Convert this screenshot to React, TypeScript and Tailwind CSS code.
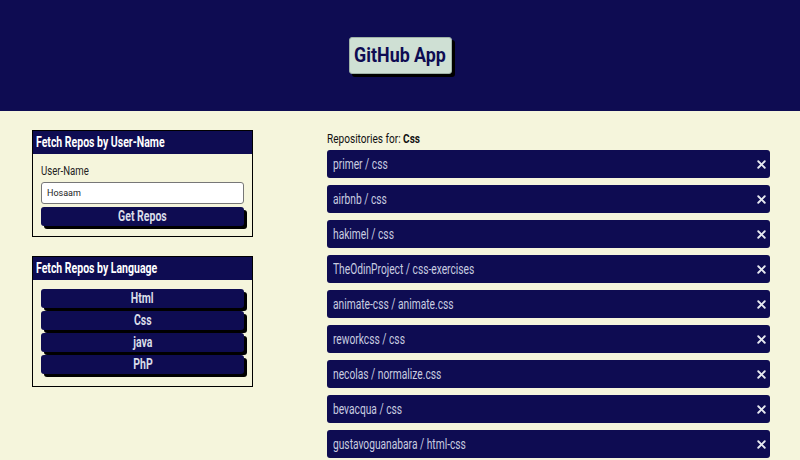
import { X } from 'lucide-react'
import type { ReactNode } from 'react'

const repos = [
  'primer / css',
  'airbnb / css',
  'hakimel / css',
  'TheOdinProject / css-exercises',
  'animate-css / animate.css',
  'reworkcss / css',
  'necolas / normalize.css',
  'bevacqua / css',
  'gustavoguanabara / html-css',
]

const langs = ['Html', 'Css', 'java', 'PhP']

const font = { fontFamily: 'Roboto, "Liberation Sans", sans-serif' }

// the original uses a condensed face; squeeze Roboto to match widths
function Narrow({ children, className = 'scale-x-[0.75] origin-center' }: { children: ReactNode; className?: string }) {
  return <span className={`inline-block whitespace-nowrap ${className}`}>{children}</span>
}

export default function App() {
  return (
    <div className="min-h-[460px] bg-[#f5f5dc]" style={font}>
      {/* Header */}
      <header className="h-[111px] bg-[#0e0c52] flex items-center justify-center">
        <div className="bg-[#cfe0d4] text-[#0e0c52] font-bold text-[21px] h-[37px] w-[103px] flex items-center justify-center rounded-[3px] border border-[#9fb3a8] shadow-[3px_3px_0_#000]">
          <Narrow className="scale-x-[0.85] origin-center">GitHub App</Narrow>
        </div>
      </header>

      <main className="flex pl-[32px] pt-[19px]">
        {/* Left column */}
        <div className="w-[221px] flex flex-col gap-[19px]">
          <section className="border border-black h-[107px]">
            <div className="bg-[#0e0c52] text-white font-bold text-[14px] h-[23px] flex items-center px-[3px]">
              <Narrow className="scale-x-[0.75] origin-left">Fetch Repos by User-Name</Narrow>
            </div>
            <div className="px-[8px] pt-[10px]">
              <div className="text-[12px] text-[#222] leading-[14px]">
                <Narrow className="scale-x-[0.8] origin-left">User-Name</Narrow>
              </div>
              <input
                defaultValue="Hosaam"
                className="mt-[4px] w-[203px] h-[22px] bg-white border border-[#777] rounded-[3px] px-[5px] text-[9px] text-[#222] outline-none"
              />
              <button className="mt-[3px] w-[203px] h-[19px] bg-[#0e0c52] text-[#d9dde8] font-bold text-[14px] rounded-[3px] shadow-[3px_3px_0_#000] flex items-center justify-center">
                <Narrow>Get Repos</Narrow>
              </button>
            </div>
          </section>

          <section className="border border-black h-[131px]">
            <div className="bg-[#0e0c52] text-white font-bold text-[14px] h-[23px] flex items-center px-[3px]">
              <Narrow className="scale-x-[0.75] origin-left">Fetch Repos by Language</Narrow>
            </div>
            <div className="px-[8px] pt-[9px] flex flex-col gap-[3px]">
              {langs.map((l) => (
                <button
                  key={l}
                  className="w-[203px] h-[19px] bg-[#0e0c52] text-[#d9dde8] font-bold text-[14px] rounded-[3px] shadow-[3px_3px_0_#000] flex items-center justify-center"
                >
                  <Narrow>{l}</Narrow>
                </button>
              ))}
            </div>
          </section>
        </div>

        {/* Right column */}
        <div className="ml-[74px] w-[443px]">
          <div className="text-[12px] text-[#111] h-[12px] leading-[12px] mt-[3px]">
            <Narrow className="scale-x-[0.84] origin-left">
              Repositories for: <span className="font-bold">Css</span>
            </Narrow>
          </div>
          <div className="mt-[5px] flex flex-col gap-[7px]">
            {repos.map((r) => (
              <div
                key={r}
                className="h-[28px] bg-[#0e0c52] rounded-[3px] flex items-center justify-between pl-[6px] pr-[2px] text-[#c9cde0] text-[14px]"
              >
                <Narrow className="scale-x-[0.73] origin-left">{r}</Narrow>
                <X size={13} strokeWidth={3.5} className="text-[#e6e9f0]" />
              </div>
            ))}
          </div>
        </div>
      </main>
    </div>
  )
}
